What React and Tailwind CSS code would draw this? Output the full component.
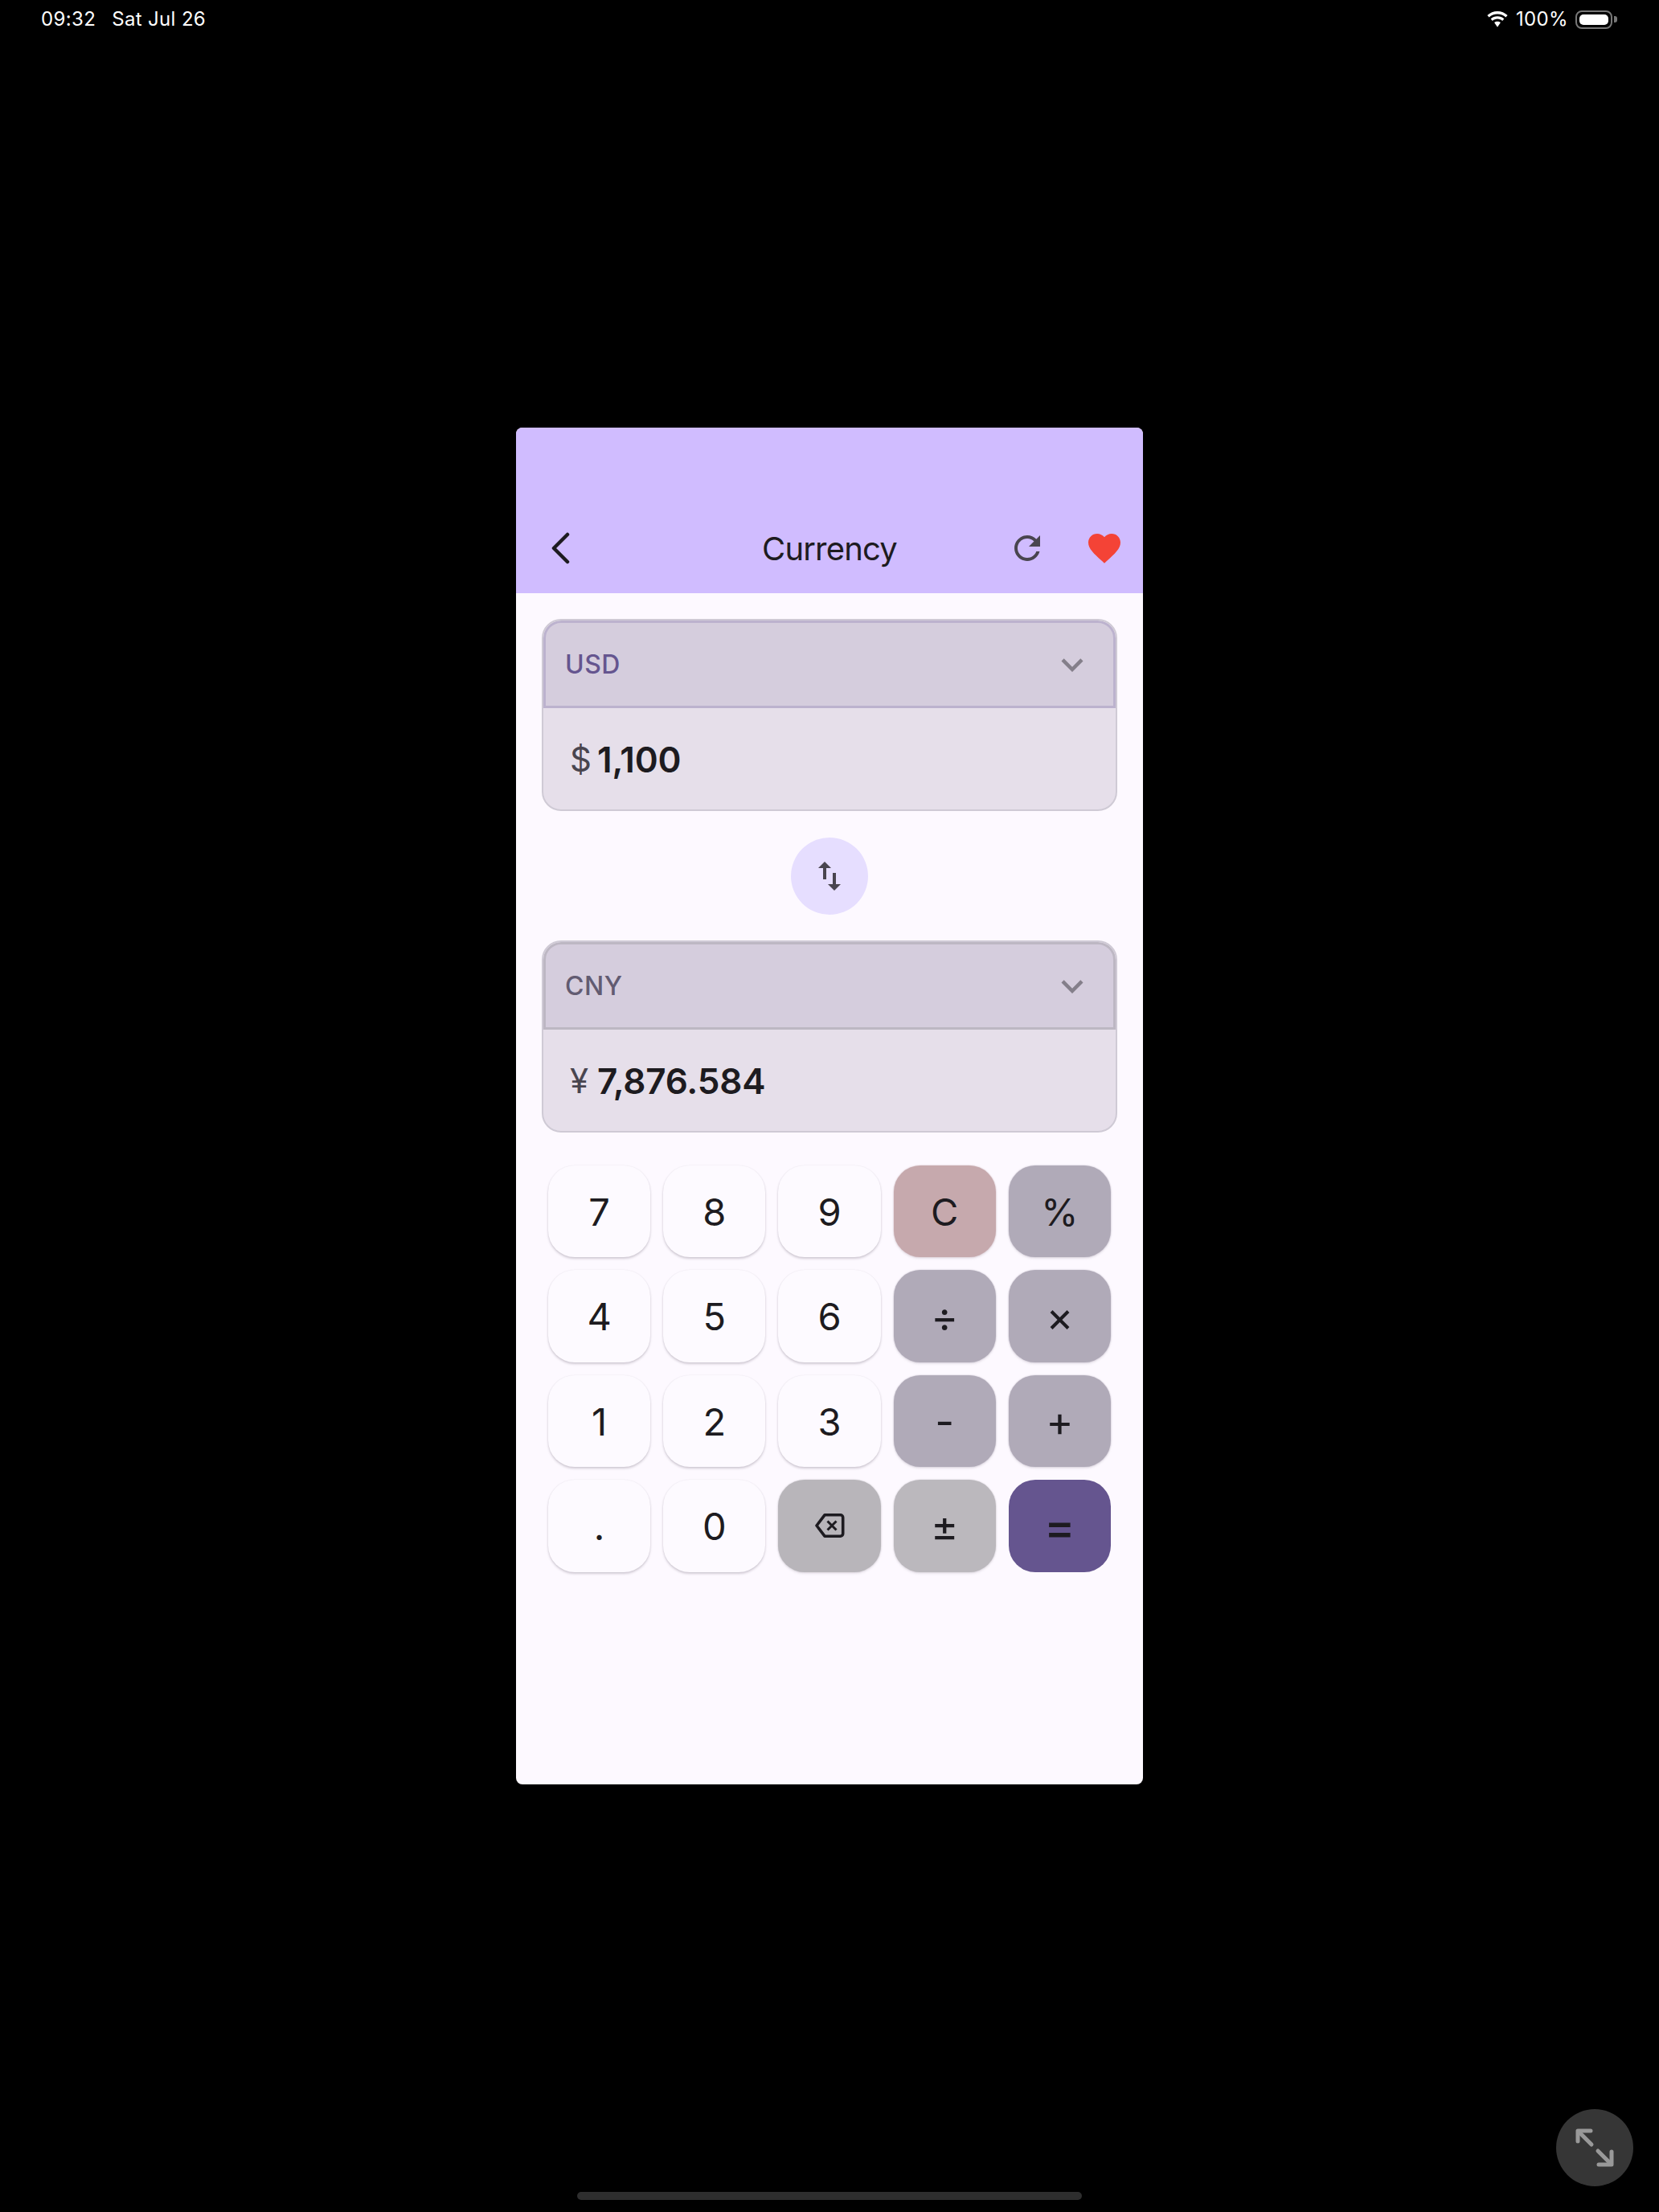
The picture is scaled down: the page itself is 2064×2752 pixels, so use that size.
import React from "react";

const Ic = ({ d, size = 48, className = "" }) => (
  <svg width={size} height={size} viewBox="0 0 24 24" fill="currentColor" className={className}>
    <path d={d} />
  </svg>
);

const EXPAND = "M16.59 8.59L12 13.17 7.41 8.59 6 10l6 6 6-6z";

function Field({ code, sym, value, codeCls, lineCls }) {
  return (
    <div className="h-[239px] rounded-[24px] border-2 border-[#cfcad5] bg-[#e6dfea] overflow-hidden flex flex-col">
      <div className={`h-[109px] shrink-0 border-[3px] ${lineCls} bg-[#d5cddd] rounded-t-[22px] flex items-center justify-between pl-[24px] pr-[24px]`}>
        <span className={`text-[32px] font-medium tracking-[0.5px] ${codeCls}`}>{code}</span>
        <Ic d={EXPAND} size={54} className="text-[#847f8a]" />
      </div>
      <div className="flex-1 flex items-center pl-[33px] pt-[1px] leading-none">
        <span className="text-[#49454f] text-[42px] w-[34px]">{sym}</span>
        <span className="font-semibold text-[44px] text-[#1d1b20] tracking-[-0.2px]">{value}</span>
      </div>
    </div>
  );
}

function Key({ children, cls }) {
  return (
    <div className={`h-[114.4px] rounded-[33px] flex items-center justify-center pt-[2px] text-[47px] text-[#1d1b20] ${cls}`}>
      {children}
    </div>
  );
}

const W = "bg-[#fdfaff] shadow-[0_2px_3px_rgba(70,60,80,0.24),0_0_2px_rgba(70,60,80,0.08)]";
const G = "bg-[#b0aab8] shadow-[0_0_2px_rgba(176,170,184,0.8),0_2px_3px_rgba(70,60,80,0.1)]";
const R = "bg-[#c6a9ad] shadow-[0_0_2px_rgba(198,169,173,0.8),0_2px_3px_rgba(70,60,80,0.1)]";
const B = "bg-[#b8b5ba] shadow-[0_0_2px_rgba(184,181,186,0.8),0_2px_3px_rgba(70,60,80,0.1)]";
const L = "bg-[#bbb8bd] shadow-[0_0_2px_rgba(187,184,189,0.8),0_2px_3px_rgba(70,60,80,0.1)]";

export default function App() {
  return (
    <div className="relative w-[2064px] h-[2752px] bg-black overflow-hidden flex flex-col font-['Inter',sans-serif]">
      {/* status bar */}
      <div className="h-[48px] shrink-0 flex items-center justify-between pl-[51px] pr-[52px] text-white text-[24px] tracking-[0.35px]">
        <div className="flex gap-[20px]">
          <span>09:32</span>
          <span>Sat Jul 26</span>
        </div>
        <div className="flex items-center">
          <svg width="28" height="20" viewBox="0 0 28 20" fill="white" className="mr-[9px]">
            <path d="M14 3.4c4 0 7.6 1.5 10.4 4.1l2.2-2.4C23.2 1.9 18.8 0 14 0S4.800 1.900 1.400 5.100l2.200 2.400C6.400 4.900 10 3.400 14 3.400z" />
            <path d="M14 9.600c2.400 0 4.500.9 6.100 2.300l2.200-2.400C20.100 7.500 17.200 6.300 14 6.300S7.900 7.500 5.700 9.500l2.200 2.400c1.600-1.400 3.700-2.300 6.100-2.300z" />
            <path d="M14 12.700c-1.500 0-2.800.5-3.900 1.400L14 19.800l3.900-5.700c-1.100-.9-2.400-1.400-3.900-1.400z" />
          </svg>
          <span className="mr-[9px]">100%</span>
          <div className="w-[46px] h-[23px] rounded-[8px] border-2 border-[#777] p-[3px]">
            <div className="w-full h-full bg-white rounded-[5px]" />
          </div>
          <div className="w-[4px] h-[8px] ml-[2px] bg-[#777] rounded-r-[3px]" />
        </div>
      </div>

      {/* app window */}
      <div className="w-[780px] h-[1688px] mt-[484px] mx-auto rounded-[8px] overflow-hidden bg-[#fdf9ff] flex flex-col">
        <div className="h-[206px] shrink-0 bg-[#d0bcff] flex flex-col justify-end">
          <div className="h-[112px] grid grid-cols-[1fr_auto_1fr] items-center">
            <div className="pl-[43px]">
              <svg width="24" height="40" viewBox="0 0 24 40" fill="none" stroke="#1d1b20" strokeWidth="4.500" strokeLinecap="round" strokeLinejoin="round">
                <path d="M21 3 L4 20 L21 37" />
              </svg>
            </div>
            <div className="text-[40px] text-[#1d1b20] tracking-[-0.8px] pt-[2px]">Currency</div>
            <div className="flex items-center justify-end pr-[24px] gap-[48px]">
              <Ic className="text-[#49454f]" d="M17.65 6.35C16.2 4.9 14.21 4 12 4c-4.42 0-7.99 3.58-7.99 8s3.57 8 7.99 8c3.73 0 6.84-2.55 7.73-6h-2.08c-.82 2.33-3.04 4-5.65 4-3.31 0-6-2.69-6-6s2.69-6 6-6c1.66 0 3.14.69 4.22 1.78L13 11h7V4l-2.35 2.35z" />
              <Ic className="text-[#f44336]" d="M12 21.35l-1.45-1.32C5.4 15.36 2 12.28 2 8.5 2 5.42 4.42 3 7.5 3c1.74 0 3.41.81 4.5 2.09C13.09 3.81 14.76 3 16.5 3 19.58 3 22 5.42 22 8.5c0 3.78-3.4 6.86-8.55 11.54L12 21.35z" />
            </div>
          </div>
        </div>

        <div className="px-[32px] pt-[32px] flex flex-col">
          <Field code="USD" sym="$" value="1,100" codeCls="text-[#65558f]" lineCls="border-[#bcb2ce]" />
          <div className="mt-[33px] mb-[32px] self-center w-[96px] h-[96px] rounded-full bg-[#e6deff] flex items-center justify-center text-[#49454f]">
            <Ic d="M16 17.01V10h-2v7.01h-3L15 21l4-3.99h-3zM9 3L5 6.99h3V14h2V6.99h3L9 3z" />
          </div>
          <Field code="CNY" sym="¥" value="7,876.584" codeCls="text-[#625b71]" lineCls="border-[#bdb7c3]" />

          <div className="mt-[41px] px-[8px] grid grid-cols-5 gap-[16px]">
            <Key cls={W}>7</Key>
            <Key cls={W}>8</Key>
            <Key cls={W}>9</Key>
            <Key cls={R}>C</Key>
            <Key cls={G}>%</Key>
            <Key cls={W}>4</Key>
            <Key cls={W}>5</Key>
            <Key cls={W}>6</Key>
            <Key cls={`${G} !text-[52px]`}>÷</Key>
            <Key cls={`${G} !text-[52px]`}>×</Key>
            <Key cls={W}>1</Key>
            <Key cls={W}>2</Key>
            <Key cls={W}>3</Key>
            <Key cls={`${G} !text-[52px]`}>-</Key>
            <Key cls={`${G} !text-[52px]`}>+</Key>
            <Key cls={W}>.</Key>
            <Key cls={W}>0</Key>
            <Key cls={B}>
              <svg width="38" height="34" viewBox="0 0 38 34" fill="none" stroke="#1d1b20" strokeWidth="3.600" strokeLinejoin="round" strokeLinecap="butt" className="-mt-[2px]">
                <path d="M13 3.800 H32.500 a3.200 3.200 0 0 1 3.200 3.200 V27 a3.200 3.200 0 0 1 -3.200 3.200 H13 L3 17 Z" />
                <path d="M16.500 11.500 L27.500 22.500 M27.500 11.500 L16.500 22.500" strokeWidth="3" />
              </svg>
            </Key>
            <Key cls={`${L} !text-[52px]`}>±</Key>
            <Key cls="bg-[#65558f] font-medium !text-[58px]">=</Key>
          </div>
        </div>
      </div>

      {/* home indicator */}
      <div className="absolute left-[718px] bottom-[15px] w-[628px] h-[10px] rounded-full bg-[#2e2e2e]" />

      {/* floating expand button */}
      <div className="absolute left-[1936px] top-[2624px] w-[96px] h-[96px] rounded-full bg-[#363636] flex items-center justify-center">
        <svg width="48" height="48" viewBox="0 0 48 48" fill="none" stroke="#999" strokeWidth="5" strokeLinecap="round" strokeLinejoin="round">
          <path d="M3 16 V3 H19" />
          <path d="M4 4 L20 20" />
          <path d="M45 29 V45 H29" />
          <path d="M44 44 L28 28" />
        </svg>
      </div>
    </div>
  );
}
